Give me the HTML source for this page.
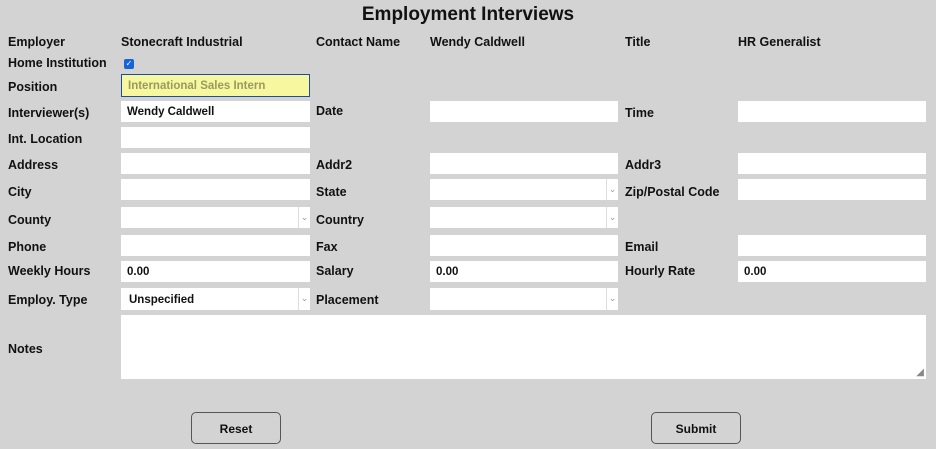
<!DOCTYPE html>
<html><head><style>
body{margin:0;width:936px;height:449px;background:#d3d3d3;position:relative;overflow:hidden;font-family:"Liberation Sans","DejaVu Sans",sans-serif;color:#111}
.t{position:absolute;left:0;width:936px;top:4px;text-align:center;font-weight:bold;font-size:19px}
.l{position:absolute;font-weight:bold;font-size:12.5px;line-height:14px;white-space:nowrap}
.i{position:absolute;background:#fff;height:21px;box-sizing:border-box;font-size:11.5px;font-weight:bold;line-height:23px;padding-left:6px;white-space:nowrap}
.s span.d{position:absolute;right:0;top:0;width:11px;height:100%;border-left:1px solid #ddd;color:#999;font-size:9px;text-align:center;line-height:21px;font-weight:normal}
.b{position:absolute;width:90px;height:32px;border:1px solid #555;border-radius:5px;box-sizing:border-box;text-align:center;line-height:32px;font-weight:bold;font-size:12px}
</style></head><body>
<div class="t">Employment Interviews</div>
<div class="l" style="left:8px;top:35px">Employer</div>
<div class="l" style="left:121px;top:35px">Stonecraft Industrial</div>
<div class="l" style="left:316px;top:35px">Contact Name</div>
<div class="l" style="left:430px;top:35px">Wendy Caldwell</div>
<div class="l" style="left:625px;top:35px">Title</div>
<div class="l" style="left:738px;top:35px">HR Generalist</div>
<div class="l" style="left:8px;top:56px">Home Institution</div>
<div style="position:absolute;left:124px;top:59px;width:10px;height:10px;background:#1565d8;border-radius:2px;color:#fff;font-size:8px;line-height:10px;text-align:center">✓</div>
<div class="l" style="left:8px;top:80px">Position</div>
<div class="i" style="left:121px;top:74px;width:189px;height:23px;background:#f7f7a0;border:1px solid #1a4fa0;color:#999a60;font-weight:bold;line-height:23px">International Sales Intern</div>
<div class="l" style="left:8px;top:106px">Interviewer(s)</div>
<div class="i" style="left:121px;top:101px;width:189px">Wendy Caldwell</div>
<div class="l" style="left:316px;top:104px">Date</div>
<div class="i" style="left:430px;top:101px;width:188px"></div>
<div class="l" style="left:625px;top:106px">Time</div>
<div class="i" style="left:738px;top:101px;width:188px"></div>
<div class="l" style="left:8px;top:132px">Int. Location</div>
<div class="i" style="left:121px;top:127px;width:189px"></div>
<div class="l" style="left:8px;top:158px">Address</div>
<div class="i" style="left:121px;top:153px;width:189px"></div>
<div class="l" style="left:316px;top:158px">Addr2</div>
<div class="i" style="left:430px;top:153px;width:188px"></div>
<div class="l" style="left:625px;top:158px">Addr3</div>
<div class="i" style="left:738px;top:153px;width:188px"></div>
<div class="l" style="left:8px;top:185px">City</div>
<div class="i" style="left:121px;top:179px;width:189px"></div>
<div class="l" style="left:316px;top:185px">State</div>
<div class="i s" style="left:430px;top:179px;width:188px"><span class="d">⌄</span></div>
<div class="l" style="left:625px;top:185px">Zip/Postal Code</div>
<div class="i" style="left:738px;top:179px;width:188px"></div>
<div class="l" style="left:8px;top:213px">County</div>
<div class="i s" style="left:121px;top:207px;width:189px"><span class="d">⌄</span></div>
<div class="l" style="left:316px;top:213px">Country</div>
<div class="i s" style="left:430px;top:207px;width:188px"><span class="d">⌄</span></div>
<div class="l" style="left:8px;top:240px">Phone</div>
<div class="i" style="left:121px;top:235px;width:189px"></div>
<div class="l" style="left:316px;top:240px">Fax</div>
<div class="i" style="left:430px;top:235px;width:188px"></div>
<div class="l" style="left:625px;top:240px">Email</div>
<div class="i" style="left:738px;top:235px;width:188px"></div>
<div class="l" style="left:8px;top:264px">Weekly Hours</div>
<div class="i" style="left:121px;top:261px;width:189px">0.00</div>
<div class="l" style="left:316px;top:264px">Salary</div>
<div class="i" style="left:430px;top:261px;width:188px">0.00</div>
<div class="l" style="left:625px;top:264px">Hourly Rate</div>
<div class="i" style="left:738px;top:261px;width:188px">0.00</div>
<div class="l" style="left:8px;top:293px">Employ. Type</div>
<div class="i s" style="left:121px;top:288px;width:189px;height:22px;line-height:25px;padding-left:8px">Unspecified<span class="d">⌄</span></div>
<div class="l" style="left:316px;top:293px">Placement</div>
<div class="i s" style="left:430px;top:288px;width:188px;height:22px"><span class="d">⌄</span></div>
<div class="l" style="left:8px;top:342px">Notes</div>
<div class="i" style="left:121px;top:315px;width:805px;height:64px"><span style="position:absolute;right:2px;bottom:1px;color:#888;font-size:10px;font-weight:normal;line-height:10px">◢</span></div>
<div class="b" style="left:191px;top:412px">Reset</div>
<div class="b" style="left:651px;top:412px">Submit</div>
</body></html>
